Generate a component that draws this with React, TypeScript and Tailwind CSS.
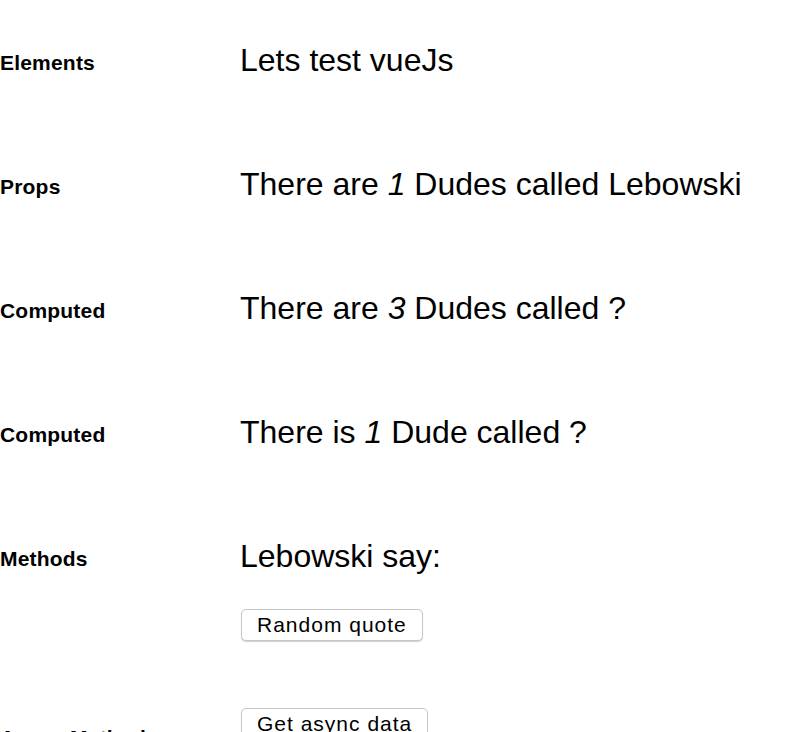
const label = 'w-[240px] shrink-0 text-[21px] leading-[24px] font-bold text-black tracking-[0.2px]'
const title = 'text-[32px] leading-[36px] font-normal text-black'
const btn =
  'bg-white border border-[#c6c6c6] rounded-[5px] shadow-[0_1px_1px_rgba(0,0,0,0.18)] px-[15px] text-[21px] leading-[30px] tracking-[1px] text-black'

export default function App() {
  return (
    <div
      className="w-[800px] h-[732px] overflow-hidden bg-white pt-[42px]"
      style={{ fontFamily: '"Liberation Sans", Arial, sans-serif' }}
    >
      <div className="flex items-start mb-[88px]">
        <div className={`${label} pt-[9px]`}>Elements</div>
        <h1 className={title}>Lets test vueJs</h1>
      </div>

      <div className="flex items-start mb-[88px]">
        <div className={`${label} pt-[9px]`}>Props</div>
        <h1 className={title}>
          There are <i>1</i> Dudes called Lebowski
        </h1>
      </div>

      <div className="flex items-start mb-[88px]">
        <div className={`${label} pt-[9px]`}>Computed</div>
        <h1 className={title}>
          There are <i>3</i> Dudes called ?
        </h1>
      </div>

      <div className="flex items-start mb-[88px]">
        <div className={`${label} pt-[9px]`}>Computed</div>
        <h1 className={title}>
          There is <i>1</i> Dude called ?
        </h1>
      </div>

      <div className="flex items-start mb-[67px]">
        <div className={`${label} pt-[9px]`}>Methods</div>
        <div className="flex flex-col items-start">
          <h1 className={title}>Lebowski say:</h1>
          <button className={`${btn} mt-[35px] ml-[1px]`}>Random quote</button>
        </div>
      </div>

      <div className="flex items-start">
        <div className={`${label} pt-[18px]`}>Async Methods</div>
        <div className="flex flex-col items-start">
          <button className={`${btn} ml-[1px]`}>Get async data</button>
        </div>
      </div>
    </div>
  )
}
